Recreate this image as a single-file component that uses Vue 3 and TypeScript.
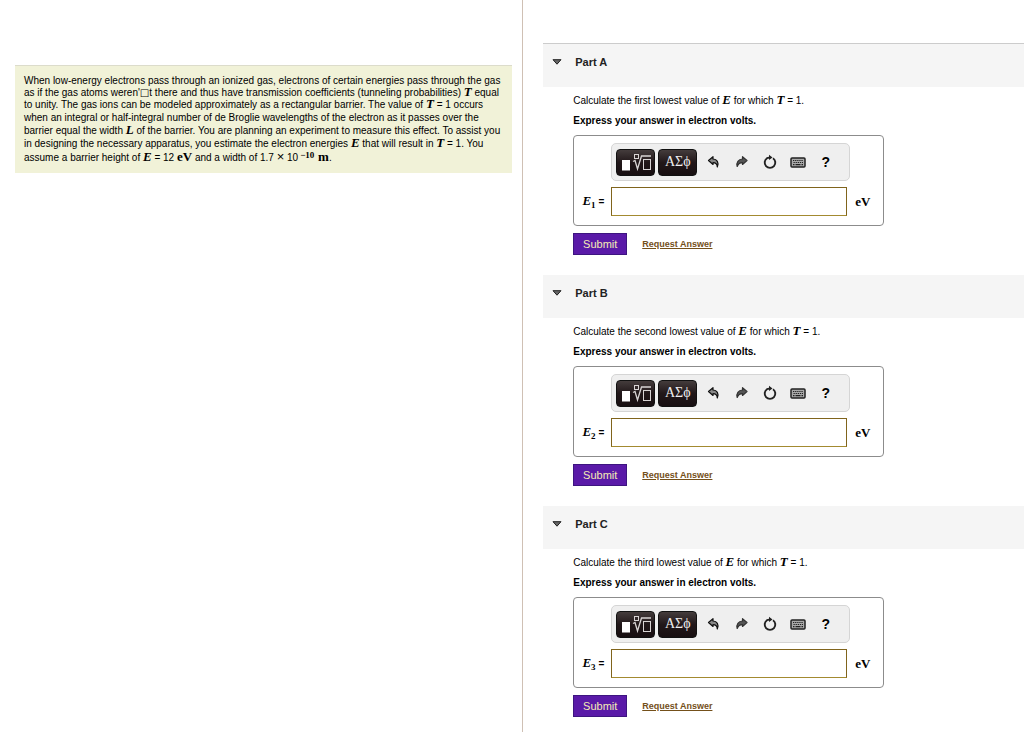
<script setup lang="ts">
import { reactive } from 'vue'

interface Part {
  id: string
  order: string
  index: number
  open: boolean
  answer: string
}

const parts = reactive<Part[]>([
  { id: 'A', order: 'first', index: 1, open: true, answer: '' },
  { id: 'B', order: 'second', index: 2, open: true, answer: '' },
  { id: 'C', order: 'third', index: 3, open: true, answer: '' },
])
</script>

<template>
  <div class="page">
    <aside class="intro">
      <p class="problem">
        <span class="line">When low-energy electrons pass through an ionized gas, electrons of certain energies pass through the gas</span>
        <span class="line">as if the gas atoms weren'<span class="box">□</span>t there and thus have transmission coefficients (tunneling probabilities) <i class="math">T</i> equal</span>
        <span class="line">to unity. The gas ions can be modeled approximately as a rectangular barrier. The value of <i class="math">T</i> = 1 occurs</span>
        <span class="line">when an integral or half-integral number of de Broglie wavelengths of the electron as it passes over the</span>
        <span class="line">barrier equal the width <i class="math">L</i> of the barrier. You are planning an experiment to measure this effect. To assist you</span>
        <span class="line">in designing the necessary apparatus, you estimate the electron energies <i class="math">E</i> that will result in <i class="math">T</i> = 1. You</span>
        <span class="line">assume a barrier height of <i class="math">E</i> = 12 <span class="unit">eV</span> and a width of 1.7 <span class="times">×</span> 10<sup class="power">−10</sup> <span class="unit">m</span>.</span>
      </p>
    </aside>

    <main class="parts">
      <section v-for="part in parts" :key="part.id" class="part">
        <h2 class="heading">
          <button class="toggle" type="button" :aria-expanded="part.open" @click="part.open = !part.open">
            <svg class="caret" viewBox="0 0 10 6" aria-hidden="true">
              <path d="M1 .7H9L5 5.2Z" fill="#666" stroke="#222" stroke-width="1" />
            </svg>
            Part {{ part.id }}
          </button>
        </h2>

        <div v-show="part.open" class="body">
          <p class="ask">
            Calculate the {{ part.order }} lowest value of <i class="math">E</i> for which <i class="math">T</i> = 1.
          </p>
          <p class="hint">Express your answer in electron volts.</p>

          <div class="answer">
            <div class="toolbar" role="toolbar" aria-label="Equation tools">
              <button class="dark" type="button" aria-label="Templates">
                <svg width="32" height="20" viewBox="0 0 32 20" aria-hidden="true">
                  <rect x="2" y="8" width="8" height="10.500" fill="#fff" />
                  <g fill="none" stroke="#d8d4d4">
                    <rect x="14.500" y="2.500" width="4" height="4" />
                    <path d="M13 9.500L15 8.500L17.500 17L21.500 4H31" stroke-width="1.300" />
                    <rect x="23.500" y="7.500" width="7" height="10" />
                  </g>
                </svg>
              </button>
              <button class="dark greek" type="button" aria-label="Symbols">ΑΣϕ</button>
              <button class="tool" type="button" aria-label="Undo">
                <svg width="14" height="14" viewBox="0 0 14 14" aria-hidden="true">
                  <path d="M1.500 5.500L6 1.700V4C10 4.300 12.200 7.300 10.300 12C10.200 9.200 9 7.700 6 7.700V9.500Z" fill="#888" stroke="#111" stroke-width="1.200" stroke-linejoin="round" />
                </svg>
              </button>
              <button class="tool" type="button" aria-label="Redo">
                <svg width="14" height="14" viewBox="0 0 14 14" aria-hidden="true">
                  <path d="M12 5.500L7.500 1.700V4C3.500 4.300 1 7.300 2.200 11.500C3.300 8.700 4.500 7.700 7.500 7.700V9.500Z" fill="#555" stroke="#333" stroke-width="1.200" stroke-linejoin="round" />
                </svg>
              </button>
              <button class="tool" type="button" aria-label="Reset">
                <svg width="14" height="16" viewBox="0 0 14 16" aria-hidden="true">
                  <path d="M10 4.200A5.300 5.300 0 1 1 4 4.200L7.500 3.300" fill="none" stroke="#222" stroke-width="1.900" />
                  <path d="M6 .8L9.500 3.500L6 6Z" fill="#222" />
                </svg>
              </button>
              <button class="tool" type="button" aria-label="Keyboard shortcuts">
                <svg width="16" height="12" viewBox="0 0 16 12" aria-hidden="true">
                  <rect x="1" y="2" width="14" height="9" rx="1" fill="#aaa" stroke="#222" stroke-width="1.500" />
                  <path d="M3 4.500H13.500M3.500 6.500H13" fill="none" stroke="#222" stroke-width="1.200" stroke-dasharray="1.300 .8" />
                  <path d="M3 8.700H4.500M5.500 8.700H10.500M11.500 8.700H13" stroke="#222" stroke-width="1.200" />
                </svg>
              </button>
              <button class="tool help" type="button" aria-label="Help">?</button>
            </div>
            <label class="name" :for="'answer-' + part.id"><i class="math">E</i><sub class="index">{{ part.index }}</sub> =</label>
            <input :id="'answer-' + part.id" v-model="part.answer" class="field" type="text" autocomplete="off" />
            <span class="unit">eV</span>
          </div>

          <div class="actions">
            <button class="submit" type="button">Submit</button>
            <a class="request" href="#">Request Answer</a>
          </div>
        </div>
      </section>
    </main>
  </div>
</template>

<style>
body {
  margin: 0;
  background: #fff;
}
</style>

<style scoped>
* {
  box-sizing: border-box;
}
.page {
  display: grid;
  grid-template-columns: 51% 1fr;
  min-height: 100vh;
  font: 10px/12px "Liberation Sans", Arial, sans-serif;
  color: #000;
}
button {
  font: inherit;
  color: inherit;
  padding: 0;
  border: 0;
  background: none;
  cursor: pointer;
}
.intro {
  padding: 65px 10px 0 15px;
}
.problem {
  margin: 0;
  padding: 9px 9px 8px;
  border-top: 1px solid #dcdccb;
  background: #f1f2d8;
}
.line {
  display: block;
  white-space: nowrap;
}
.line:nth-child(n + 4) {
  line-height: 13px;
}
.line:last-child {
  line-height: 15px;
}
.box {
  font: 10px/1px "DejaVu Sans", sans-serif;
}
.math,
.unit {
  font-family: "Liberation Serif", "Times New Roman", serif;
  font-size: 13px;
  font-weight: bold;
  line-height: 1px;
}
.times {
  font-size: 13px;
  line-height: 1px;
}
.power {
  margin: 0 1px 0 2px;
  font: bold 9px/1px "Liberation Serif", serif;
  vertical-align: 3px;
}
.parts {
  padding: 43px 0 0 20px;
  border-left: 1px solid #cfc0b4;
}
.heading {
  margin: 0;
  background: #f5f5f5;
}
.part:first-child .heading {
  border-top: 1px solid #ccc;
}
.toggle {
  display: flex;
  align-items: center;
  gap: 13px;
  width: 100%;
  height: 43px;
  padding: 0 9px 8px;
  color: #222;
  font-size: 11px;
  font-weight: bold;
}
.caret {
  width: 10px;
  height: 6px;
}
.body {
  padding: 4px 16px 20px 30px;
}
.part:last-child .body {
  padding-bottom: 0;
}
.ask,
.hint {
  margin: 0;
  line-height: 20px;
}
.hint {
  font-weight: bold;
}
.answer {
  display: grid;
  grid-template-columns: 37px 236px 1fr;
  align-content: start;
  align-items: center;
  gap: 6px 0;
  width: 311px;
  max-width: 100%;
  height: 91px;
  margin-top: 4px;
  padding-top: 7px;
  border: 1px solid #8c8c8c;
  border-radius: 4px;
}
.toolbar {
  grid-column: 2 / 4;
  justify-self: start;
  display: flex;
  align-items: center;
  gap: 3px;
  width: 239px;
  height: 38px;
  padding: 0 4px;
  border: 1px solid #d5d5d5;
  border-radius: 5px;
  background: #efefef;
}
.dark {
  display: grid;
  place-items: center;
  width: 39px;
  height: 27px;
  border: 1px solid #111;
  border-radius: 4px;
  background: linear-gradient(#443c3c, #211719 50%, #180f11);
  color: #eee;
}
.greek {
  margin-right: 1px;
  font: 14px/24px "Liberation Serif", "DejaVu Serif", serif;
}
.tool {
  display: grid;
  place-items: center;
  width: 25px;
  height: 26px;
}
.help {
  font-size: 14px;
  font-weight: bold;
}
.name {
  padding-right: 7px;
  text-align: right;
  font-weight: bold;
  white-space: nowrap;
}
.index {
  font: bold 9px/1px "Liberation Serif", serif;
}
.field {
  width: 100%;
  height: 29px;
  padding: 0 6px;
  border: 1px solid #80641c;
  border-bottom-color: #a38a30;
  border-radius: 0;
  background: #fff;
  font: 12px "Liberation Sans", Arial, sans-serif;
}
.answer > .unit {
  padding-left: 8px;
}
.actions {
  display: flex;
  align-items: center;
  gap: 15px;
  margin-top: 7px;
}
.submit {
  width: 54px;
  height: 22px;
  border: 1px solid #3d1580;
  background: #5a1aa8;
  color: #f6ebb5;
  font-size: 11px;
}
.request {
  color: #74501a;
  font-size: 9px;
  font-weight: bold;
}
</style>
